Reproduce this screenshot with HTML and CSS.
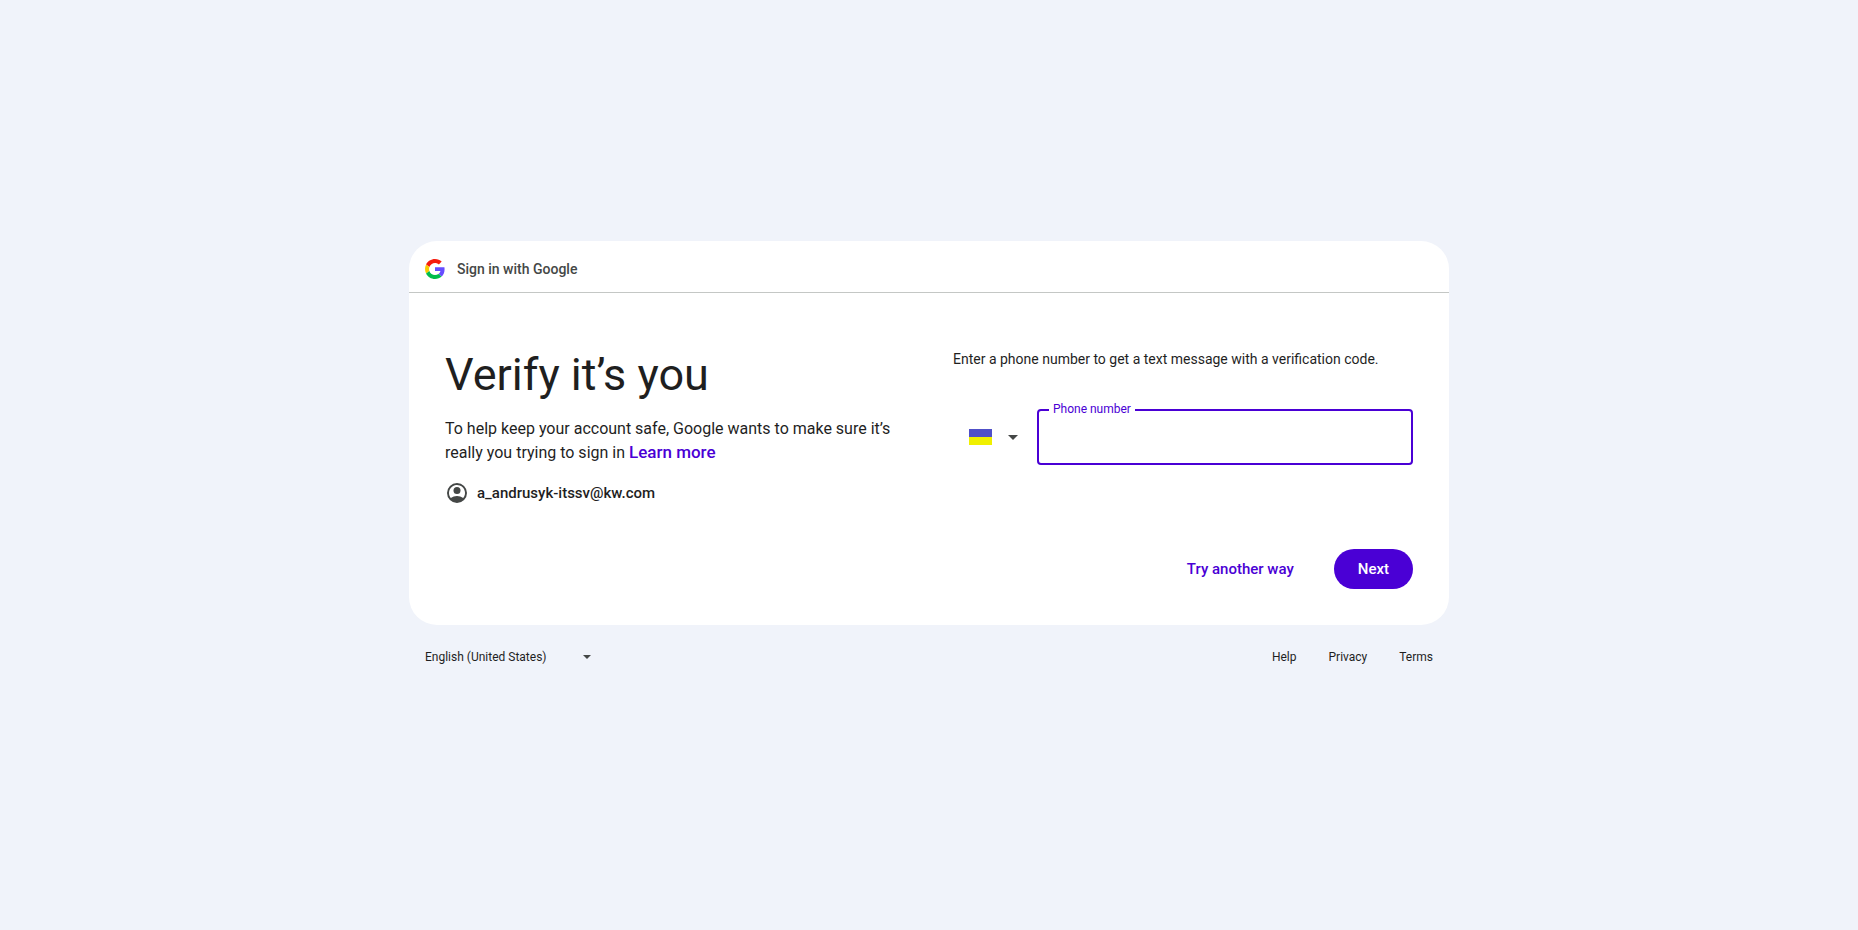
FILE: index.html
```html
<!DOCTYPE html>
<html lang="en">
<head>
<meta charset="utf-8">
<meta name="viewport" content="width=device-width, initial-scale=1">
<title>Verify it’s you</title>
<link rel="stylesheet" href="styles.css">
</head>
<body>
<div class="page">
  <main class="card">
    <header class="card-header">
      <svg class="logo" viewBox="0 0 48 48" aria-hidden="true">
        <path fill="#f61c0d" d="M24 9.5c3.54 0 6.71 1.22 9.21 3.6l6.85-6.85C35.9 2.38 30.47 0 24 0 14.62 0 6.51 5.38 2.56 13.22l7.98 6.19C12.43 13.72 17.74 9.5 24 9.5z"/>
        <path fill="#664dff" d="M46.98 24.55c0-1.57-.15-3.09-.38-4.55H24v9.02h12.94c-.58 2.96-2.26 5.48-4.78 7.18l7.73 6c4.51-4.18 7.09-10.36 7.09-17.65z"/>
        <path fill="#f9cb00" d="M10.53 28.59c-.48-1.45-.76-2.99-.76-4.59s.27-3.14.76-4.59l-7.98-6.19C.92 16.46 0 20.12 0 24s.92 7.54 2.56 10.78l7.97-6.19z"/>
        <path fill="#00bd4c" d="M24 48c6.48 0 11.93-2.13 15.89-5.81l-7.73-6c-2.15 1.45-4.92 2.3-8.16 2.3-6.26 0-11.57-4.22-13.47-9.91l-7.98 6.19C6.51 42.62 14.62 48 24 48z"/>
      </svg>
      <span class="brand">Sign in with Google</span>
    </header>
    <div class="card-body">
      <section class="intro">
        <h1 class="title">Verify it’s you</h1>
        <p class="lead">To help keep your account safe, Google wants to make sure it’s really you trying to sign in <a class="link" href="#">Learn more</a></p>
        <div class="account">
          <svg class="avatar" viewBox="0 0 24 24" aria-hidden="true"><path fill-rule="evenodd" d="M12 2a10 10 0 1 0 0 20 10 10 0 0 0 0-20zM5.860 17.120C4.700 15.730 4 13.950 4 12a8 8 0 1 1 14.140 5.120C16.450 15.800 14.320 15 12 15s-4.450.800-6.140 2.120z"/><circle cx="12" cy="9.500" r="3.500"/></svg>
          <span class="email">a_andrusyk-itssv@kw.com</span>
        </div>
      </section>
      <section class="form">
        <p class="hint">Enter a phone number to get a text message with a verification code.</p>
        <div class="phone-row">
          <div class="country">
            <svg class="flag" viewBox="0 0 23 16" aria-hidden="true"><path fill="#5050c8" d="M0 0h23v8H0z"/><path fill="#f0f000" d="M0 8h23v8H0z"/></svg>
            <svg class="arrow" viewBox="0 0 10 5" aria-hidden="true"><path d="M0 0h10L5 5z"/></svg>
            <select class="country-select" aria-label="Country"><option label=" " value="UA" selected></option></select>
          </div>
          <div class="field">
            <label class="field-label" for="phone">Phone number</label>
            <input class="field-input" id="phone" type="tel">
          </div>
        </div>
      </section>
      <div class="actions">
        <button class="button" type="button">Try another way</button>
        <button class="button button-primary" type="button">Next</button>
      </div>
    </div>
  </main>
  <footer class="footer">
    <div class="language">
      <select class="language-select" aria-label="Language"><option>English (United States)</option></select>
      <svg class="arrow arrow-small" viewBox="0 0 10 5" aria-hidden="true"><path d="M0 0h10L5 5z"/></svg>
    </div>
    <nav class="footer-links">
      <a href="#">Help</a>
      <a href="#">Privacy</a>
      <a href="#">Terms</a>
    </nav>
  </footer>
</div>
</body>
</html>
```
FILE: styles.css
```css
* {
  box-sizing: border-box;
}

body {
  margin: 0;
  background: #f0f3fa;
  color: #1f1f1f;
  font-family: Roboto, "Liberation Sans", sans-serif;
  font-size: 14px;
  line-height: 20px;
}

h1, p {
  margin: 0;
}

a {
  color: inherit;
  text-decoration: none;
}

.page {
  display: flex;
  flex-direction: column;
  justify-content: center;
  width: 100%;
  max-width: 1040px;
  min-height: 100vh;
  margin: 0 auto;
}

.card {
  background: #fff;
  border-radius: 28px;
}

.card-header {
  display: flex;
  align-items: center;
  gap: 12px;
  padding: 18px 16px 13px;
  border-bottom: 1px solid #c4c7c5;
}

.logo {
  width: 20px;
  height: 20px;
}

.brand {
  color: #444746;
  font-weight: 500;
}

.card-body {
  display: grid;
  grid-template-columns: 1fr 1fr;
  column-gap: 48px;
  padding: 56px 36px 36px;
}

.title {
  font-size: 45px;
  font-weight: 400;
  line-height: 52px;
}

.lead {
  margin-top: 16px;
  font-size: 16px;
  line-height: 24px;
}

.link {
  color: #4a00d5;
  font-size: 17px;
  font-weight: 500;
  line-height: 20px;
}

.account {
  display: flex;
  align-items: center;
  gap: 8px;
  margin-top: 16px;
}

.avatar {
  width: 24px;
  height: 24px;
  fill: #444746;
}

.email {
  font-size: 15px;
  font-weight: 500;
}

.phone-row {
  display: flex;
  gap: 16px;
  margin-top: 40px;
}

.country {
  position: relative;
  display: flex;
  align-items: center;
  gap: 16px;
  padding: 0 3px 0 16px;
}

.flag {
  width: 23px;
  height: 16px;
}

.arrow {
  width: 10px;
  height: 5px;
  fill: #444746;
}

.country-select {
  position: absolute;
  inset: 0;
  width: 100%;
  border: 0;
  background: none;
  appearance: none;
}

.field {
  position: relative;
  flex: 1;
}

.field-label {
  position: absolute;
  top: -8px;
  left: 12px;
  padding: 0 4px;
  background: #fff;
  color: #4a00d5;
  font-size: 12px;
  line-height: 16px;
}

.field-input {
  display: block;
  width: 100%;
  height: 56px;
  padding: 0 14px;
  border: 2px solid #4a00d5;
  border-radius: 4px;
  outline: 0;
  background: none;
  font: inherit;
  font-size: 16px;
}

.actions {
  grid-column: 1 / -1;
  display: flex;
  justify-content: flex-end;
  gap: 16px;
  margin-top: 44px;
}

.button {
  height: 40px;
  padding: 0 24px;
  border: 0;
  border-radius: 20px;
  background: none;
  color: #4a00d5;
  font: inherit;
  font-size: 15px;
  font-weight: 500;
}

.button-primary {
  background: #4a00d5;
  color: #fff;
}

.footer {
  display: flex;
  align-items: center;
  justify-content: space-between;
  height: 64px;
  padding: 0 16px;
  font-size: 12px;
  line-height: 16px;
}

.language {
  display: grid;
  align-items: center;
  width: 166px;
}

.language-select {
  grid-area: 1 / 1;
  width: 100%;
  height: 32px;
  padding: 0;
  border: 0;
  background: none;
  color: inherit;
  font: inherit;
  appearance: none;
}

.arrow-small {
  grid-area: 1 / 1;
  justify-self: end;
  width: 8px;
  height: 4px;
  pointer-events: none;
}

.footer-links {
  display: flex;
  gap: 32px;
}
```
